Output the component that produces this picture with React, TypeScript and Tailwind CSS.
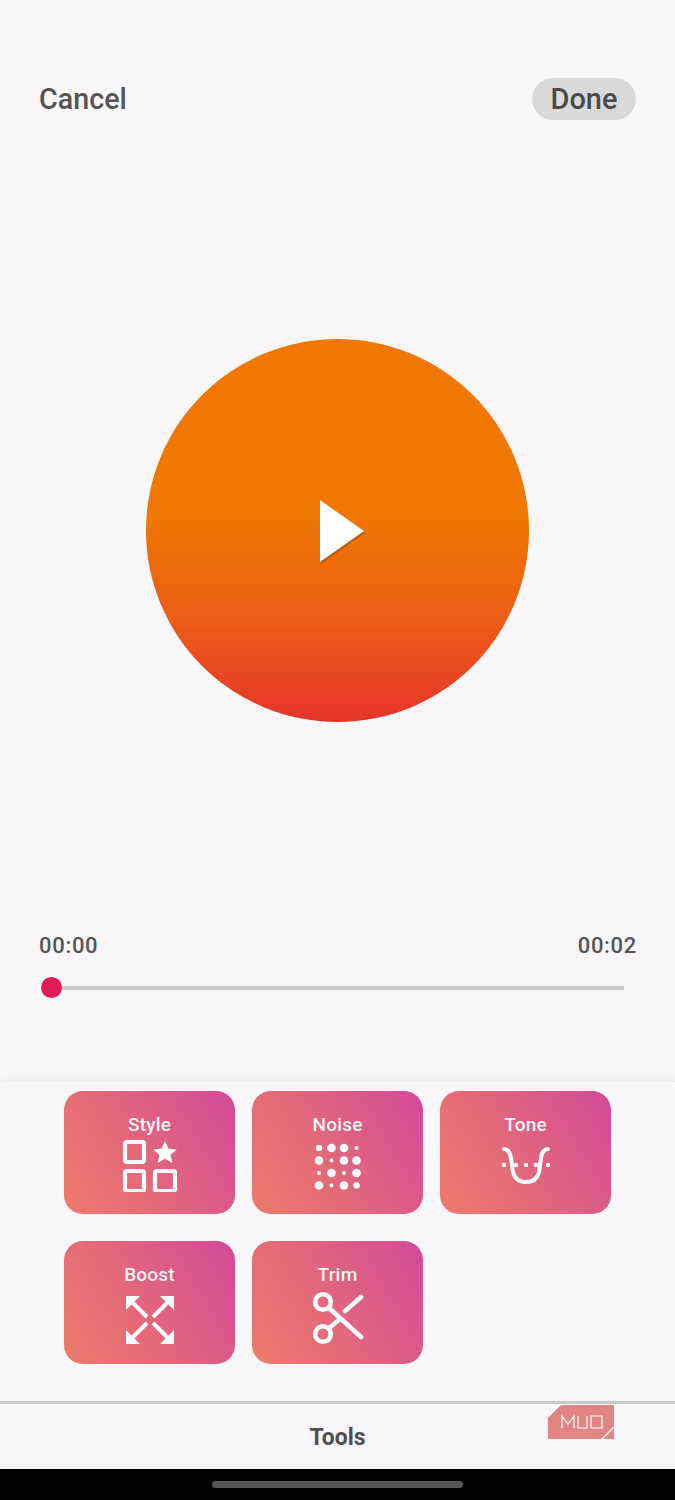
import React from "react";

const font = { fontFamily: '"Roboto", "Noto Sans", sans-serif' };

function StyleIcon() {
  return (
    <svg width="54" height="52" viewBox="0 0 54 52" fill="none" className="mb-[4px]">
      <rect x="2" y="2" width="19" height="20" rx="2" stroke="#fff" strokeWidth="4.200" />
      <rect x="2" y="31" width="19" height="20" rx="2" stroke="#fff" strokeWidth="4.200" />
      <rect x="32" y="31" width="20" height="20" rx="2" stroke="#fff" strokeWidth="4.200" />
      <path d="M42 1l3.400 7.600 8.400.8-6.300 5.500 1.900 8.100-7.400-4.300-7.400 4.300 1.900-8.100-6.300-5.500 8.400-.8z" fill="#fff" />
    </svg>
  );
}

function NoiseIcon() {
  const rows = [
    [3.200, 4.300, 4.300, 2],
    [4.300, 2, 4.300, 4.300],
    [2, 4.300, 2, 4.300],
    [4.300, 2, 4.300, 3.200],
  ];
  return (
    <svg width="48" height="48" viewBox="0 0 48 48" fill="#fff" className="mb-[2px]">
      {rows.map((r, y) =>
        r.map((s, x) => <circle key={`${x}-${y}`} cx={5 + x * 12.500} cy={5 + y * 12.500} r={s} />),
      )}
    </svg>
  );
}

function ToneIcon() {
  return (
    <svg width="50" height="40" viewBox="0 0 50 40" fill="none" className="mb-[4px]">
      <path
        d="M3 3c4 0 6 3 7 9 1 5 1 10 2 14 1.500 6 6 10 13 10s11.500-4 13-10c1-4 1-9 2-14 1-6 3-9 7-9"
        stroke="#fff"
        strokeWidth="4"
        strokeLinecap="round"
      />
      {[3, 15, 25, 35, 47].map((x) => (
        <circle key={x} cx={x} cy="19" r="2.200" fill="#fff" />
      ))}
    </svg>
  );
}

function BoostIcon() {
  return (
    <svg width="50" height="50" viewBox="0 0 50 50" fill="none" className="mt-[3px]">
      <g stroke="#fff" strokeWidth="4">
        <path d="M5 5l17 17M45 5L28 22M5 45l17-17M45 45L28 28" />
      </g>
      <path d="M1 1h14L1 15zM49 1v14L35 1zM1 49V35l14 14zM49 49H35l14-14z" fill="#fff" />
    </svg>
  );
}

function TrimIcon() {
  return (
    <svg width="52" height="54" viewBox="0 0 52 54" fill="none" stroke="#fff" strokeWidth="4.600" strokeLinecap="round" className="mb-[1px]">
      <circle cx="11" cy="11" r="7.800" />
      <circle cx="11" cy="43" r="7.800" />
      <path d="M16.500 16.500L49 46M16.500 37.500L28 28M33 20L49 6" />
    </svg>
  );
}

function Tool({ label, children }: { label: string; children: React.ReactNode }) {
  return (
    <div className="flex h-[123px] w-[171px] flex-col items-center rounded-[19px] bg-[linear-gradient(60deg,#ee7a6c_0%,#e2687b_45%,#d4499a_100%)] pt-[23px]">
      <span className="text-[19px] leading-[22px] font-medium tracking-[0.2px] text-white/95">{label}</span>
      <div className="mt-[4px] flex h-[56px] items-center justify-center">{children}</div>
    </div>
  );
}

export default function App() {
  return (
    <div className="relative flex h-[1500px] w-[675px] flex-col overflow-hidden bg-[#f9f7f9]" style={font}>
      <header className="flex items-center justify-between pt-[78px] pr-[39px] pl-[39px]">
        <span className="text-[28.700px] leading-[42px] font-medium text-[#555]">Cancel</span>
        <span className="flex h-[42px] w-[104px] items-center justify-center rounded-full bg-[#dadada] pt-[2px] text-[29px] font-medium text-[#4a4a4a]">
          Done
        </span>
      </header>

      <div className="mt-[219px] flex justify-center">
        <div className="flex h-[383px] w-[383px] items-center justify-center rounded-full bg-[linear-gradient(180deg,#f07800_0%,#f07800_46%,#ec5f17_72%,#e5352b_100%)]">
          <svg width="56" height="72" viewBox="0 0 56 72" className="mt-[4px] ml-[16px]">
            <path d="M3 5l44 31-44 31z" fill="#000" fillOpacity="0.2" />
            <path d="M2 3l44 31-44 31z" fill="#fff" />
          </svg>
        </div>
      </div>

      <div className="mt-[209px] flex justify-between pr-[38px] pl-[39px] text-[22px] leading-[30px] font-medium tracking-[0.7px] text-[#555]">
        <span>00:00</span>
        <span>00:02</span>
      </div>

      <div className="mt-[16px] flex items-center pl-[41px]">
        <div className="h-[21px] w-[21px] shrink-0 rounded-full bg-[#e01b56]" />
        <div className="h-[4px] w-[562px] bg-[#c9c8ca]" />
      </div>

      <div className="mt-[83px] flex flex-1 flex-col border-t border-[#ececec] shadow-[0_-3px_6px_rgba(0,0,0,0.05)]">
        <div className="grid grid-cols-[171px_171px_171px] gap-x-[17px] gap-y-[27px] pt-[9px] pl-[64px]">
          <Tool label="Style"><StyleIcon /></Tool>
          <Tool label="Noise"><NoiseIcon /></Tool>
          <Tool label="Tone"><ToneIcon /></Tool>
          <Tool label="Boost"><BoostIcon /></Tool>
          <Tool label="Trim"><TrimIcon /></Tool>
        </div>

        <div className="relative mt-[37px] flex h-[68px] items-center justify-center border-t-[3px] border-[#c8c8c8] pt-[4px]">
          <span className="text-[23px] font-bold text-[#505050]">Tools</span>
          <svg width="66" height="34" viewBox="0 0 66 34" className="absolute top-[1px] left-[548px]">
            <path d="M0 13L13 0h53v21L53 34H0z" fill="#e08582" />
            <path d="M66 23v11H55z" fill="#e08582" />
            <path d="M14 23V11l6 8 6-8v12M30 11v12h9V11M43 11h11v12H43z" fill="none" stroke="#fff" strokeWidth="1.200" />
          </svg>
        </div>

        <div className="flex h-[31px] justify-center bg-black pt-[12px]">
          <div className="h-[7px] w-[251px] rounded-full bg-[#555]" />
        </div>
      </div>
    </div>
  );
}
